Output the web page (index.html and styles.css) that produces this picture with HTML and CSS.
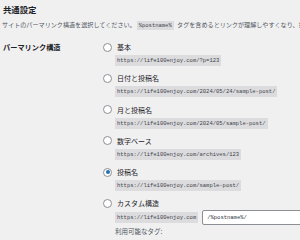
FILE: index.html
```html
<!DOCTYPE html>
<html lang="ja">
<head>
<meta charset="utf-8">
<link rel="stylesheet" href="styles.css">
</head>
<body>
<div class="wrap">
  <h2 class="title">共通設定</h2>
  <p class="desc">サイトのパーマリンク構造を選択してください。<code class="inline">%postname%</code> タグを含めるとリンクが理解しやすくなり、投稿が検索エンジンで上位に表示されやすくなる可能性があります。</p>
  <div class="section">
    <div class="label">パーマリンク構造</div>
    <div class="options">
      <div class="opt">
        <div class="radio-row"><span class="radio"></span><span class="name">基本</span></div>
        <div class="code-row"><code>https://life100enjoy.com/?p=123</code></div>
      </div>
      <div class="opt">
        <div class="radio-row"><span class="radio"></span><span class="name">日付と投稿名</span></div>
        <div class="code-row"><code>https://life100enjoy.com/2024/05/24/sample-post/</code></div>
      </div>
      <div class="opt">
        <div class="radio-row"><span class="radio"></span><span class="name">月と投稿名</span></div>
        <div class="code-row"><code>https://life100enjoy.com/2024/05/sample-post/</code></div>
      </div>
      <div class="opt">
        <div class="radio-row"><span class="radio"></span><span class="name">数字ベース</span></div>
        <div class="code-row"><code>https://life100enjoy.com/archives/123</code></div>
      </div>
      <div class="opt">
        <div class="radio-row"><span class="radio checked"></span><span class="name">投稿名</span></div>
        <div class="code-row"><code>https://life100enjoy.com/sample-post/</code></div>
      </div>
      <div class="opt">
        <div class="radio-row"><span class="radio"></span><span class="name">カスタム構造</span></div>
        <div class="code-row custom"><code>https://life100enjoy.com</code><span class="input">/%postname%/</span></div>
        <div class="tags">利用可能なタグ:</div>
      </div>
    </div>
  </div>
</div>
</body>
</html>
```
FILE: styles.css
```css
html, body {
  margin: 0;
  padding: 0;
  background: #f0f0f1;
  overflow: hidden;
  width: 300px;
  height: 240px;
}
body {
  font-family: "Noto Sans CJK JP", "Noto Sans", sans-serif;
  color: #1d2327;
}
.wrap {
  padding: 4px 0 0 3px;
}
.title {
  margin: 0;
  font-size: 8.4px;
  line-height: 10px;
  font-weight: 600;
  color: #1d2327;
}
.desc {
  margin: 6px 0 0 -1px;
  font-size: 6.1px;
  line-height: 9px;
  white-space: nowrap;
  color: #50575e;
}
code {
  font-family: "Liberation Mono", monospace;
  font-size: 5.5px;
  background: #dcdcde;
  color: #3c434a;
  padding: 2px 2px;
  line-height: 7px;
  display: inline-block;
}
.desc code.inline {
  padding: 1px 2px;
  margin: 0 2px 0 1px;
}
.section {
  display: flex;
  margin-top: 12px;
}
.label {
  width: 100px;
  flex: none;
  font-size: 7.2px;
  line-height: 10px;
  font-weight: 600;
}
.options {
  display: flex;
  flex-direction: column;
  gap: 7.3px;
}
.opt {
  display: flex;
  flex-direction: column;
}
.radio-row {
  display: flex;
  align-items: center;
  height: 10px;
}
.radio {
  width: 7px;
  height: 7px;
  border: 1px solid #8c8f94;
  border-radius: 50%;
  background: #fff;
  margin-right: 5px;
  position: relative;
  flex: none;
}
.radio.checked::after {
  content: "";
  position: absolute;
  left: 1.5px;
  top: 1.5px;
  width: 4px;
  height: 4px;
  border-radius: 50%;
  background: #2271b1;
}
.name {
  font-size: 7px;
  line-height: 10px;
}
.code-row {
  display: flex;
  align-items: center;
  padding-left: 12px;
  height: 11px;
  margin-top: 3px;
}
.code-row.custom {
  height: 15px;
  margin-top: 2px;
}
.input {
  margin-left: 4px;
  font-family: "Liberation Mono", monospace;
  font-size: 5.5px;
  background: #fff;
  border: 1px solid #8c8f94;
  border-radius: 2px;
  height: 13px;
  line-height: 13px;
  padding: 0 4px;
  width: 100px;
  flex: none;
  color: #2c3338;
}
.tags {
  padding-left: 12px;
  font-size: 6.5px;
  line-height: 10px;
  color: #50575e;
  margin-top: 1px;
}
```
